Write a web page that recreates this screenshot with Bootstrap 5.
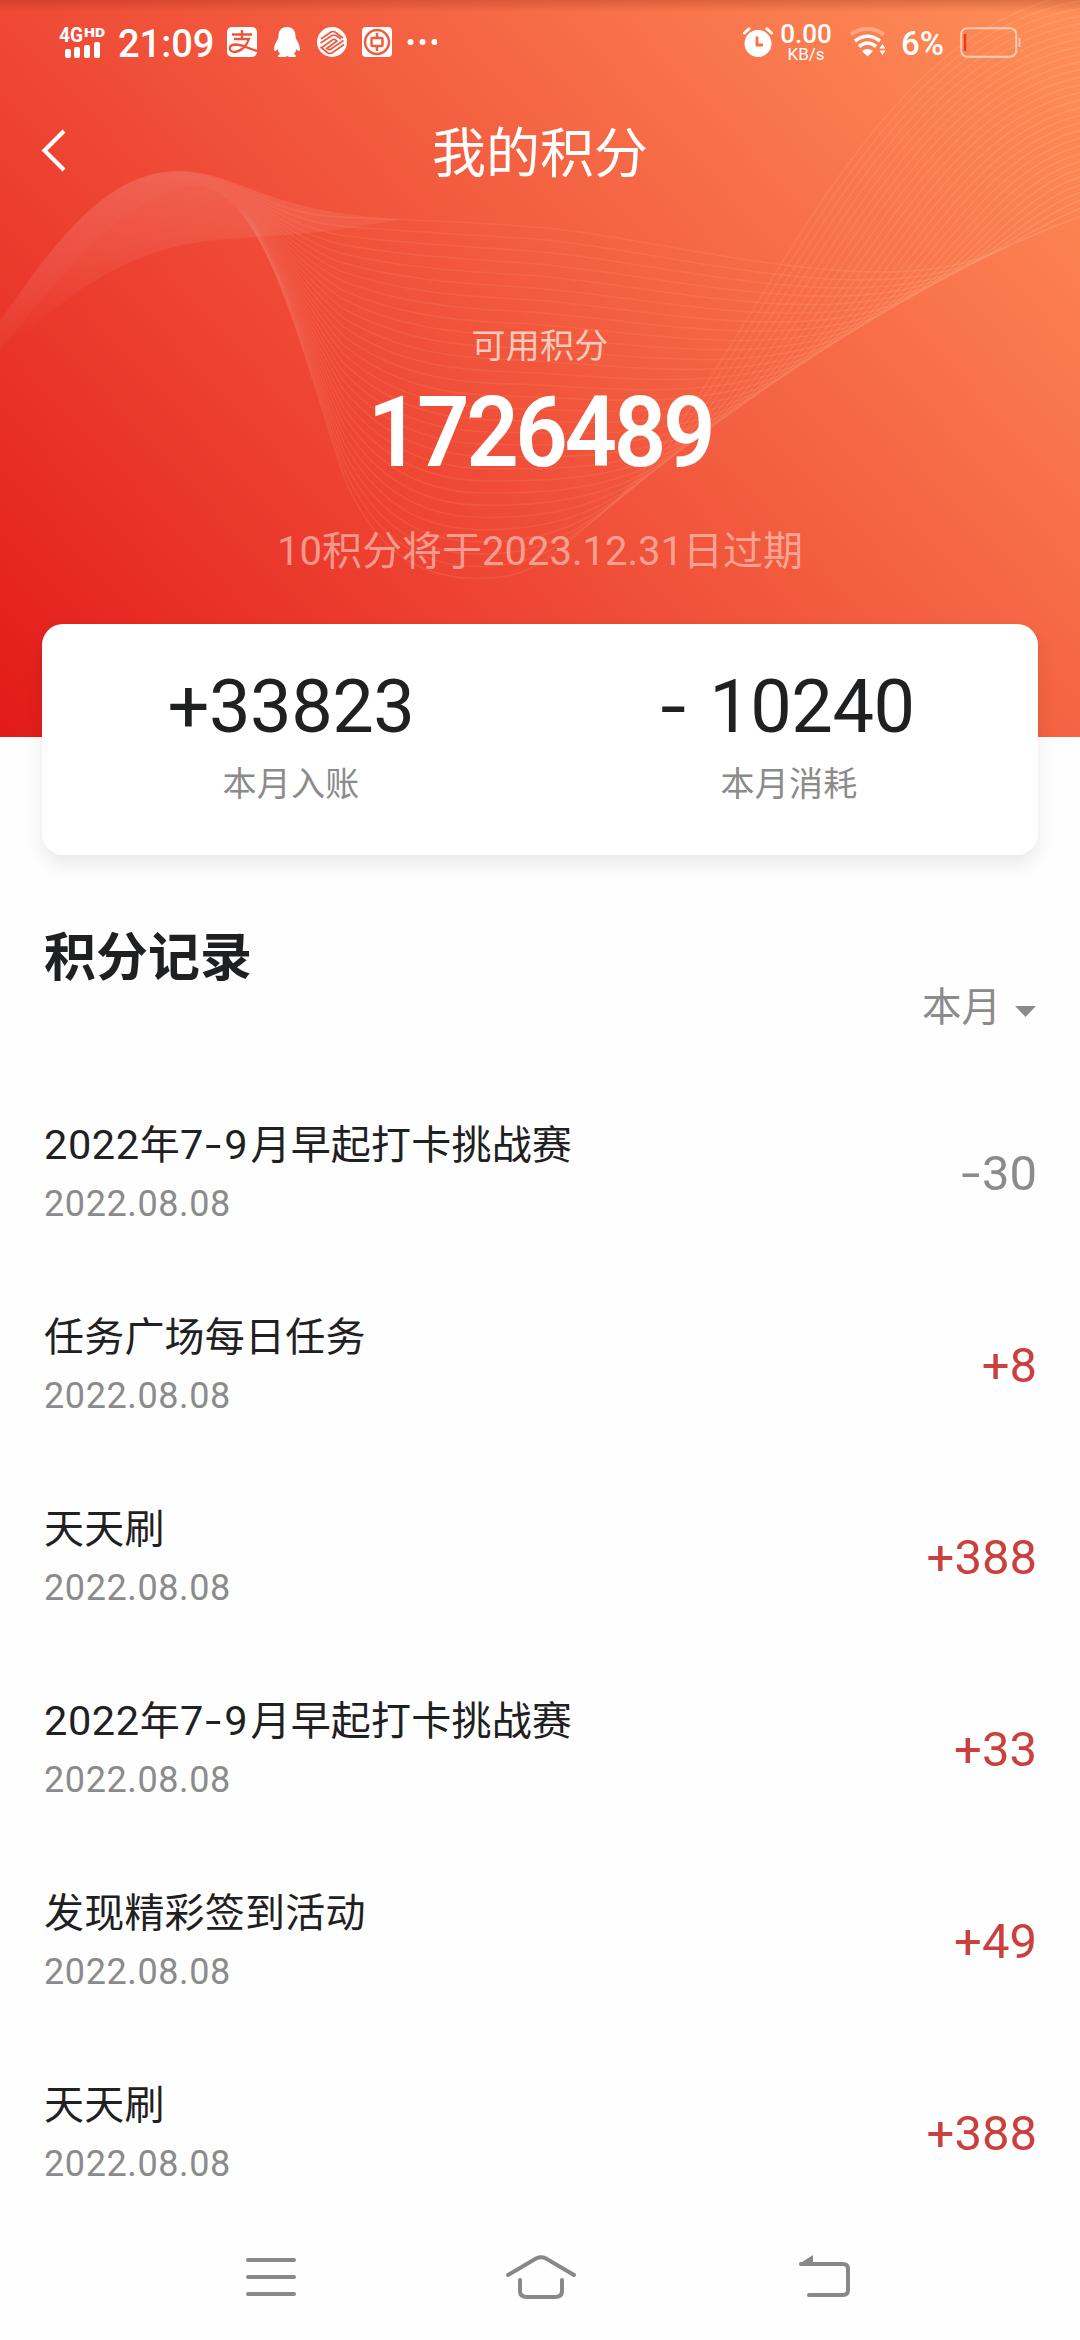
<!DOCTYPE html>
<html lang="zh-CN">
<head>
<meta charset="utf-8">
<meta name="viewport" content="width=device-width, initial-scale=1">
<title>我的积分</title>
<link href="https://cdn.jsdelivr.net/npm/bootstrap@5.3.0/dist/css/bootstrap.min.css" rel="stylesheet">
<style>
body{font-family:Roboto,"Noto Sans CJK SC",sans-serif;color:#1f2021;background:#fefefe;width:1080px;height:2340px;overflow:hidden}
.hero{height:737px;background:linear-gradient(47deg,#e21a19 0%,#e72a23 13%,#ee4634 36%,#f25a3e 53%,#f8714a 73%,#ff9058 100%)}
.hero-waves{left:0;top:0;width:1080px;height:737px}
.hero-shade{left:0;top:0;width:100%;height:12px;background:linear-gradient(rgba(140,40,20,.28),transparent)}
.statusbar{height:84px;padding-left:59px;padding-right:59px}
.net{width:46px;height:32px;overflow:visible}
.clock{font-size:38px;font-weight:500;line-height:44px;margin-left:13px;width:95px;padding-top:4px}
.speed{width:52px;font-weight:500;line-height:1;margin-left:7px}
.speed-num{font-size:26px;line-height:24px}
.speed-unit{font-size:17px;line-height:16px;font-weight:400}
.pct{font-size:33px;font-weight:500;width:49px;margin-left:15px;line-height:40px;padding-top:4px}
.appbar{height:136px;padding-top:3px}
.appbar h1{font-size:54px;font-weight:400;line-height:136px}
.back{left:40px;top:45px}
.avail{font-size:34px;line-height:50px;margin-top:101px;color:rgba(255,235,225,.78);letter-spacing:.3px}
.total{font-size:98px;font-weight:600;line-height:100px;margin-top:12px;letter-spacing:-3.6px;transform:scaleX(.94)}
.expire{font-size:40px;line-height:60px;margin-top:39px;color:rgba(255,215,205,.62)}
.summary{margin:-113px 42px 0;height:231px;border-radius:21px;box-shadow:0 9px 18px rgba(0,0,0,.085);padding-top:41px}
.sum-num{font-size:74px;line-height:84px;letter-spacing:-.5px}
.sum-dash{display:inline-block;transform:scaleX(1.25);margin-right:8px}
.sum-label{font-size:34px;line-height:50px;margin-top:10px;color:#8b8b8b;letter-spacing:.3px}
.rec-head{height:223px;padding:0 44px}
.rec-head h2{font-size:52px;font-weight:700;line-height:70px;margin-top:69px}
.month{font-size:39.5px;line-height:54px;color:#8b8b8b;margin-top:126px;gap:14px}
.rec{height:192px;padding:0 43px 0 44px}
.rec-name{font-size:40px;line-height:56px;letter-spacing:.2px;margin-top:-4px}
.lat{font-size:41.5px;letter-spacing:.6px}
.lat-wide{letter-spacing:2.8px}
.dash{display:inline-block;transform:scaleX(1.4);margin:0 2px}
.rec-date{font-size:36px;line-height:46px;margin-top:7px;color:#8b8b8b;letter-spacing:.6px}
.amt{font-size:49px;line-height:60px;color:#c9403c}
.amt-out{color:#8b8b8b}
.navkeys{height:110px;padding:0 229px 16px 245px}
.home-key{margin-right:14px}
</style>
</head>
<body>
<header class="hero position-relative text-white">
  <svg class="hero-waves position-absolute" viewBox="0 0 1080 737" fill="none">
    <defs>
      <linearGradient id="glow" x1="0" y1="0" x2=".35" y2="1">
        <stop offset="0" stop-color="#fff" stop-opacity=".14"/><stop offset=".45" stop-color="#fff" stop-opacity=".08"/><stop offset=".85" stop-color="#fff" stop-opacity="0"/>
      </linearGradient>
      <linearGradient id="fade" gradientUnits="userSpaceOnUse" x1="0" y1="0" x2="1080" y2="0">
        <stop offset="0" stop-color="#fff" stop-opacity=".015"/><stop offset=".22" stop-color="#fff" stop-opacity=".008"/><stop offset=".31" stop-color="#ffa080" stop-opacity=".16"/><stop offset=".6" stop-color="#ffa888" stop-opacity=".14"/><stop offset="1" stop-color="#ffc49a" stop-opacity=".24"/>
      </linearGradient>
    </defs>
    <path fill="url(#glow)" d="M0 322C60 232 112 171 178 171C238 171 262 212 400 219C330 235 270 235 215 240C110 250 50 315 0 352Z"/>
    <g id="waves" stroke="url(#fade)" stroke-width="1.5"></g>
  </svg>
  <div class="hero-shade position-absolute"></div>

  <div class="statusbar position-relative d-flex align-items-center">
    <svg class="net" viewBox="0 0 46 32" fill="#fff"><text x="0" y="15.500" font-size="20" font-weight="700" textLength="24" lengthAdjust="spacingAndGlyphs">4G</text><text x="25" y="10.500" font-size="13" font-weight="900" textLength="21" lengthAdjust="spacingAndGlyphs">HD</text><rect x="6" y="23" width="6" height="9" rx="2"/><rect x="15" y="21" width="6" height="11" rx="2"/><rect x="25" y="19" width="6" height="13" rx="2"/><rect x="35" y="16" width="6" height="16" rx="2"/></svg>
    <div class="clock">21:09</div>
    <svg style="margin-left:14px" width="30" height="30" viewBox="0 0 30 30"><rect width="30" height="30" rx="5" fill="#fff"/><g fill="none" stroke="#ee5439" stroke-width="2.300"><path d="M5 7.500H25M15 3V12M7 12H22C20 18 15 24 8 25C1 25 1 18 8 17.500C15 17.500 20 21 30 24"/></g></svg>
    <svg style="margin-left:17px" width="26" height="30" viewBox="0 0 26 30" fill="#fff"><path d="M13 0C7 0 4.500 4 4.500 9C4.500 13 0 16 0 23C1 25 2 24 3.500 22C4 24.500 5 26 6.500 27C3 28 3 30 6 30H11L13 29L15 30H20C23 30 23 28 19.500 27C21 26 22 24.500 22.500 22C24 24 25 25 26 23C26 16 21.500 13 21.500 9C21.500 4 19 0 13 0Z"/></svg>
    <svg style="margin-left:17px" width="30" height="30" viewBox="0 0 30 30" fill="none"><circle cx="15" cy="15" r="15" fill="#fff"/><g stroke="#f0593c" stroke-width="1.700"><path d="M4 12L14 5Q16 4 18 5L26 11M3.500 16L15 8.500Q17 7.500 19 8.500L24 12M5 20.500L16 12.500Q18 12 20 14L10 21.500Q12 23.500 14 22L26.500 13.500M27 17.500L15 26Q13 27 11 26L3.500 20M20 14L9 22"/></g></svg>
    <svg style="margin-left:15px" width="30" height="30" viewBox="0 0 30 30" fill="none"><rect width="30" height="30" rx="4" fill="#fff"/><g stroke="#f15b3e" stroke-width="2.500"><circle cx="15" cy="15" r="12"/><rect x="9.500" y="11" width="11" height="8" rx="1"/><path d="M15 6V11M15 19V24"/></g></svg>
    <svg style="margin-left:15px" width="30" height="8" viewBox="0 0 30 8" fill="#fff"><circle cx="3.500" cy="4" r="3"/><circle cx="15.500" cy="4" r="3"/><circle cx="27.500" cy="4" r="3"/></svg>
    <svg class="ms-auto" width="30" height="30" viewBox="0 0 30 30" fill="none"><circle cx="15" cy="16.500" r="13.500" fill="#fff"/><path d="M1.500 6L6 1.800M28.500 6L24 1.800" stroke="#fff" stroke-width="3" stroke-linecap="round"/><path d="M14 9.500V18H20" stroke="#f6704a" stroke-width="2.800"/></svg>
    <div class="speed text-center"><div class="speed-num">0.00</div><div class="speed-unit">KB/s</div></div>
    <svg style="margin-left:18px" width="36" height="30" viewBox="0 0 36 30" fill="none"><path d="M1 7.500Q17 -4 34 7.500" stroke="#fff" stroke-opacity=".3" stroke-width="4"/><path d="M5 14Q17.500 4.500 30 14" stroke="#fff" stroke-width="3.600"/><path d="M9 19.500Q17.500 12.500 26 19.500" stroke="#fff" stroke-width="3.600"/><path d="M12 24Q17.500 20 23 24L17.500 29.500ZM29.500 21.500L32.500 17L35.500 21.500ZM29.500 23.500L32.500 28L35.500 23.500Z" fill="#fff"/></svg>
    <div class="pct">6%</div>
    <svg style="margin-left:10px" width="61" height="31" viewBox="0 0 61 31" fill="none"><rect x="1.200" y="1.200" width="55" height="28.500" rx="6" stroke="#ffe2d4" stroke-opacity=".75" stroke-width="2"/><path d="M59.500 11V20" stroke="#ffe2d4" stroke-opacity=".7" stroke-width="1.800"/><path d="M5 7V24" stroke="#e93a26" stroke-width="2.400"/></svg>
  </div>

  <nav class="appbar position-relative text-center">
    <svg class="back position-absolute" width="28" height="44" viewBox="0 0 28 44" fill="none"><path d="M24 2L4.500 21.500L24 41" stroke="#fff" stroke-width="4.200"/></svg>
    <h1 class="m-0">我的积分</h1>
  </nav>

  <div class="position-relative text-center">
    <div class="avail">可用积分</div>
    <div class="total">1726489</div>
    <div class="expire">10积分将于2023.12.31日过期</div>
  </div>
</header>

<section class="summary position-relative bg-white d-flex text-center">
  <div class="w-50"><div class="sum-num">+33823</div><div class="sum-label">本月入账</div></div>
  <div class="w-50"><div class="sum-num"><span class="sum-dash">-</span> 10240</div><div class="sum-label">本月消耗</div></div>
</section>

<main>
  <div class="rec-head d-flex justify-content-between align-items-start">
    <h2 class="mb-0">积分记录</h2>
    <div class="month d-flex align-items-center">本月<svg width="21" height="11" viewBox="0 0 21 11" fill="#8b8b8b" style="margin-top:6px"><path d="M0 0H21L10.500 11Z"/></svg></div>
  </div>
  <div class="rec d-flex align-items-center justify-content-between"><div><div class="rec-name"><span class="lat">2022</span>年<span class="lat lat-wide">7<span class="dash">-</span>9</span>月早起打卡挑战赛</div><div class="rec-date">2022.08.08</div></div><div class="amt amt-out"><span class="dash me-1">-</span>30</div></div>
  <div class="rec d-flex align-items-center justify-content-between"><div><div class="rec-name">任务广场每日任务</div><div class="rec-date">2022.08.08</div></div><div class="amt">+8</div></div>
  <div class="rec d-flex align-items-center justify-content-between"><div><div class="rec-name">天天刷</div><div class="rec-date">2022.08.08</div></div><div class="amt">+388</div></div>
  <div class="rec d-flex align-items-center justify-content-between"><div><div class="rec-name"><span class="lat">2022</span>年<span class="lat lat-wide">7<span class="dash">-</span>9</span>月早起打卡挑战赛</div><div class="rec-date">2022.08.08</div></div><div class="amt">+33</div></div>
  <div class="rec d-flex align-items-center justify-content-between"><div><div class="rec-name">发现精彩签到活动</div><div class="rec-date">2022.08.08</div></div><div class="amt">+49</div></div>
  <div class="rec d-flex align-items-center justify-content-between"><div><div class="rec-name">天天刷</div><div class="rec-date">2022.08.08</div></div><div class="amt">+388</div></div>
</main>

<footer class="navkeys d-flex align-items-center justify-content-between">
  <svg width="52" height="44" viewBox="0 0 52 44" stroke="#888" stroke-width="4" stroke-linecap="round"><path d="M3 5H49M3 22H49M3 39H49"/></svg>
  <svg class="home-key" width="72" height="46" viewBox="0 0 72 46" fill="none" stroke="#888" stroke-width="4" stroke-linecap="round"><path d="M3 21L31 4.500Q36 2 41 4.500L69 21M15 26V37Q15 43 22 43H50Q57 43 57 37V26"/></svg>
  <svg width="53" height="46" viewBox="0 0 53 46" fill="none"><path d="M3 10H45Q50 10 50 15V36Q50 41 45 41H11" stroke="#888" stroke-width="4" stroke-linecap="round"/><path d="M1 10L15 1V11H2Z" fill="#888"/></svg>
</footer>

<script>
// Each strand blends the shallow wave into the deep one, then touches
// a common lower edge (ex, ey) before fanning out to the right.
const shallow=[-10,336, 60,232,112,172,178,172, 235,172,262,214,340,217, 400,220,460,221,520,226];
const deep=[-10,362, 60,275,120,200,185,186, 260,172,295,330,345,480, 380,560,430,582,490,578];
const mix=(a,b,t)=>a+(b-a)*t;
const g=document.getElementById('waves');
for(let i=0;i<30;i++){
  const t=i/29,p=shallow.map((v,k)=>mix(v,deep[k],t).toFixed(1));
  let d='M'+p[0]+' '+p[1];
  for(let k=2;k<p.length;k+=6)d+='C'+p.slice(k,k+6).join(' ');
  const ex=1000-400*t,ey=250+196*t+69*t*t,m=-(196+138*t)/400;
  const back=mix(120,45,t),fwd=mix(30,150,t);
  d+='C'+[mix(650,535,t),mix(232,576,t),ex-back,ey-m*back,ex,ey].join(' ');
  d+='C'+[ex+fwd,ey+m*fwd,mix(1060,850,t),mix(225,20,t),1090,mix(212,-8,t)].join(' ');
  const el=document.createElementNS('http://www.w3.org/2000/svg','path');
  el.setAttribute('d',d);g.appendChild(el);
}
</script>
<script src="https://cdn.jsdelivr.net/npm/bootstrap@5.3.0/dist/js/bootstrap.bundle.min.js"></script>
</body>
</html>
